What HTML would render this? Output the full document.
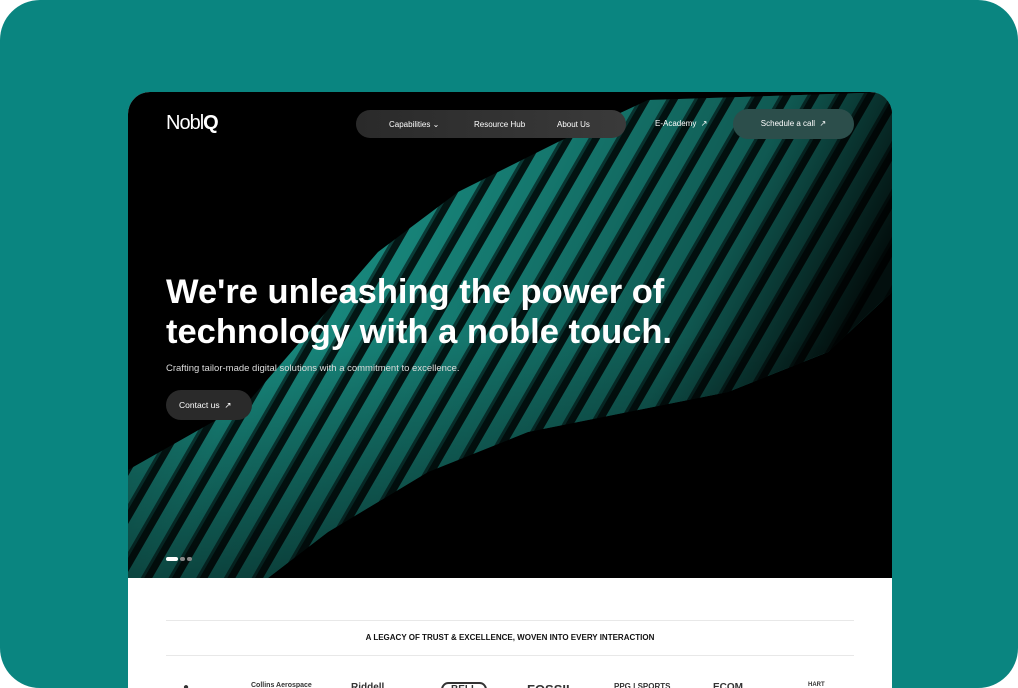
<!DOCTYPE html>
<html><head><meta charset="utf-8"><style>
*{margin:0;padding:0;box-sizing:border-box}
body{width:1018px;height:688px;background:#fff;font-family:"Liberation Sans",sans-serif;overflow:hidden;position:relative}
.frame{position:absolute;left:0;top:0;width:1018px;height:688px;border-radius:40px;background:#0a8580;overflow:hidden}
.card{position:absolute;left:128px;top:92px;width:764px;height:600px;background:#fff;border-radius:22px 22px 0 0;overflow:hidden}
.hero{position:absolute;left:0;top:0;width:764px;height:486px;background:#000;overflow:hidden}
.logo{position:absolute;left:38px;top:20px;color:#fff;font-size:20px;letter-spacing:-1px}
.nav{position:absolute;left:228px;top:18px;width:270px;height:28px;border-radius:14px;background:linear-gradient(90deg,#2a2a2a,#3a3a3a);color:#fff;font-size:8px}
.nav span{position:absolute;top:10px}
.ea{position:absolute;left:527px;top:27px;color:#fff;font-size:8px}
.sched{position:absolute;left:605px;top:17px;width:121px;height:30px;border-radius:15px;background:#2c4e4b;color:#fff;font-size:8px;line-height:30px;text-align:center}
h1{position:absolute;left:38px;top:180px;color:#fff;font-size:34.5px;line-height:40px;font-weight:bold;letter-spacing:0}
.sub{position:absolute;left:38px;top:271px;color:#ddd;font-size:9.5px}
.btn{position:absolute;left:38px;top:298px;width:86px;height:30px;border-radius:15px;background:#2a2a2a;color:#fff;font-size:8.5px;line-height:30px;padding-left:13px}
.dots{position:absolute;left:38px;top:456px}
.dots i{display:inline-block;height:4px;border-radius:2px;background:#888;width:5px;margin-right:2px}
.line{position:absolute;left:38px;width:688px;height:1px;background:#e8e8e8}
.tag{position:absolute;top:541px;left:0;width:764px;text-align:center;font-size:8px;font-weight:bold;color:#111}
.logos span{position:absolute;top:590px;font-size:10px;font-weight:bold;color:#333}
</style></head><body><div class="frame">
<div class="card">
<div class="hero">
<svg width="764" height="486" style="position:absolute;left:0;top:0">
<defs>
<pattern id="p" width="24" height="24" patternUnits="userSpaceOnUse" patternTransform="rotate(30)">
<rect width="24" height="24" fill="#031816"/><rect width="14" height="24" fill="#1a9488"/><rect x="14" width="3" height="24" fill="#0b4540"/>
</pattern>
<linearGradient id="g" x1="0" y1="0" x2="1" y2="0.3"><stop offset="0" stop-color="#000" stop-opacity="0.35"/><stop offset="0.3" stop-color="#000" stop-opacity="0.05"/><stop offset="0.55" stop-color="#000" stop-opacity="0.2"/><stop offset="0.8" stop-color="#000" stop-opacity="0.4"/><stop offset="1" stop-color="#000" stop-opacity="0.9"/></linearGradient>
<linearGradient id="v" x1="0" y1="0" x2="0" y2="1"><stop offset="0.5" stop-color="#000" stop-opacity="0"/><stop offset="1" stop-color="#000" stop-opacity="0.5"/></linearGradient>
</defs>
<path id="r" d="M0 378 L120 310 L250 160 L330 100 L430 50 L520 8 L764 0 L764 200 L700 260 L600 300 L500 320 L400 340 L300 380 L200 440 L140 486 L0 486 Z" fill="url(#p)"/>
<path d="M0 378 L120 310 L250 160 L330 100 L430 50 L520 8 L764 0 L764 200 L700 260 L600 300 L500 320 L400 340 L300 380 L200 440 L140 486 L0 486 Z" fill="url(#g)"/>
<path d="M0 378 L120 310 L250 160 L330 100 L430 50 L520 8 L764 0 L764 200 L700 260 L600 300 L500 320 L400 340 L300 380 L200 440 L140 486 L0 486 Z" fill="url(#v)"/>
</svg>
<div class="logo">Nobl<b>Q</b></div>
<div class="nav"><span style="left:33px">Capabilities ⌄</span><span style="left:118px">Resource Hub</span><span style="left:201px">About Us</span></div>
<div class="ea">E-Academy &nbsp;↗</div>
<div class="sched">Schedule a call &nbsp;↗</div>
<h1>We're unleashing the power of<br>technology with a noble touch.</h1>
<div class="sub">Crafting tailor-made digital solutions with a commitment to excellence.</div>
<div class="btn">Contact us &nbsp;↗</div>
<div class="dots"><i style="width:12px;background:#fff"></i><i></i><i></i></div>
</div>
<div class="line" style="top:528px"></div>
<div class="tag">A LEGACY OF TRUST &amp; EXCELLENCE, WOVEN INTO EVERY INTERACTION</div>
<div class="line" style="top:563px"></div>
<div class="logos"><span style="left:55px">●</span><span style="left:123px;font-size:7px">Collins Aerospace</span><span style="left:223px">Riddell</span><span style="left:313px;border:2px solid #333;border-radius:12px;padding:0 8px">BELL</span><span style="left:399px;font-size:13px">FOSSIL</span><span style="left:486px;font-size:8px">PPG | SPORTS</span><span style="left:585px">ECOM</span><span style="left:680px;font-size:6px">HART</span></div>
</div>
</div></body></html>
